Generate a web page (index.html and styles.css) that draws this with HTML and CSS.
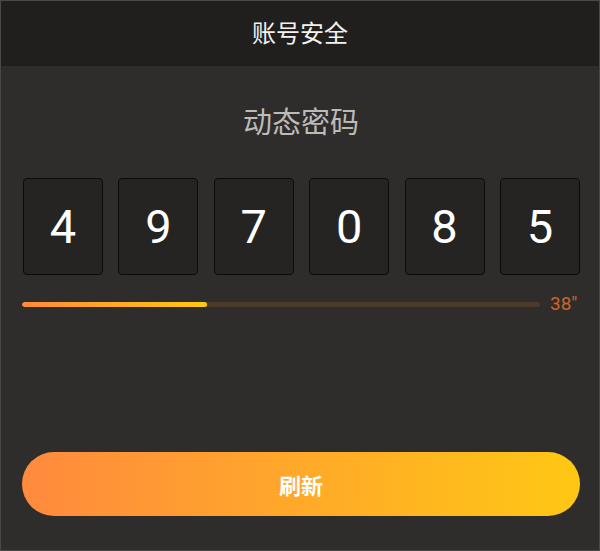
FILE: index.html
```html
<!DOCTYPE html>
<html lang="zh-CN">
<head>
<meta charset="utf-8">
<title>账号安全</title>
<link rel="stylesheet" href="styles.css">
</head>
<body>
<div class="app">
  <header class="topbar">账号安全</header>
  <main class="content">
    <h1 class="title">动态密码</h1>
    <div class="code">
      <div class="digit">4</div>
      <div class="digit">9</div>
      <div class="digit">7</div>
      <div class="digit">0</div>
      <div class="digit">8</div>
      <div class="digit">5</div>
    </div>
    <div class="timer">
      <div class="track"><div class="fill" style="width: 35.7%"></div></div>
      <span class="secs">38″</span>
    </div>
    <div class="spacer"></div>
    <button class="refresh">刷新</button>
  </main>
</div>
</body>
</html>
```

FILE: styles.css
```css
html, body {
  margin: 0;
  padding: 0;
  height: 100%;
  background: #2e2d2c;
}
.app {
  box-sizing: border-box;
  height: 551px;
  width: 600px;
  border: 1px solid #4a4948;
  display: flex;
  flex-direction: column;
  font-family: "Noto Sans CJK SC", Roboto, sans-serif;
  background: #2e2d2c;
}
.topbar {
  height: 65px;
  flex: none;
  background: #201f1e;
  color: #f2f2f2;
  font-size: 24px;
  line-height: 62px;
  text-align: center;
}
.content {
  flex: 1;
  display: flex;
  flex-direction: column;
  padding: 0 19px 34px 21px;
}
.title {
  margin: 33px 0 0;
  font-size: 29px;
  font-weight: 400;
  color: #bdbbb8;
  text-align: center;
  line-height: 42px;
}
.code {
  margin-top: 37px;
  display: flex;
  justify-content: space-between;
  padding-left: 1px;
}
.digit {
  width: 78px;
  height: 95px;
  border: 1px solid #0c0b0a;
  border-radius: 4px;
  background: #252423;
  color: #ffffff;
  font-family: Roboto, "Noto Sans", sans-serif;
  font-size: 47px;
  display: flex;
  align-items: center;
  justify-content: center;
}
.timer {
  margin-top: 19px;
  display: flex;
  align-items: center;
  gap: 10px;
}
.track {
  flex: 1;
  height: 5px;
  border-radius: 3px;
  background: #4a3a2a;
  overflow: hidden;
}
.fill {
  height: 100%;
  border-radius: 3px;
  background: linear-gradient(90deg, #ff8a3a, #ffc812);
}
.secs {
  color: #c8662c;
  font-family: Roboto, sans-serif;
  font-size: 19px;
  line-height: 20px;
  width: 30px;
}
.spacer {
  flex: 1;
}
.refresh {
  height: 64px;
  border: none;
  border-radius: 32px;
  background: linear-gradient(90deg, #ff8a3e, #ffc814);
  color: #ffffff;
  font-family: "Noto Sans CJK SC", sans-serif;
  font-size: 22px;
  font-weight: 700;
  cursor: pointer;
}
```
